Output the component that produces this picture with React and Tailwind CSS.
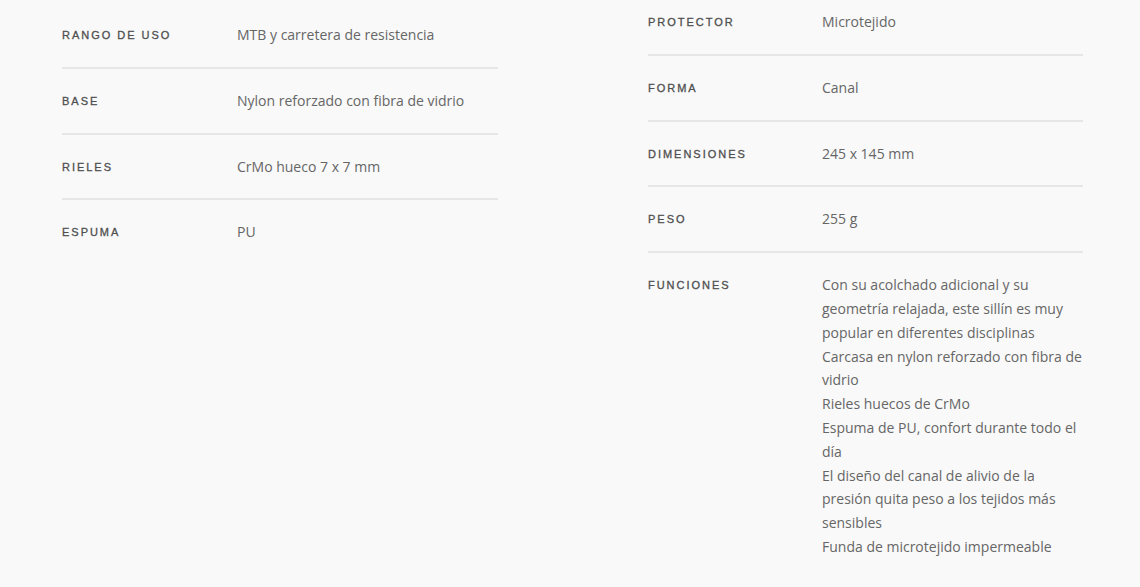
const left = [
  { label: 'Rango de uso', value: 'MTB y carretera de resistencia' },
  { label: 'Base', value: 'Nylon reforzado con fibra de vidrio' },
  { label: 'Rieles', value: 'CrMo hueco 7 x 7 mm' },
  { label: 'Espuma', value: 'PU' },
];

const right = [
  { label: 'Protector', value: 'Microtejido' },
  { label: 'Forma', value: 'Canal' },
  { label: 'Dimensiones', value: '245 x 145 mm' },
  { label: 'Peso', value: '255 g' },
  {
    label: 'Funciones',
    value: [
      'Con su acolchado adicional y su geometría relajada, este sillín es muy popular en diferentes disciplinas',
      'Carcasa en nylon reforzado con fibra de vidrio',
      'Rieles huecos de CrMo',
      'Espuma de PU, confort durante todo el día',
      'El diseño del canal de alivio de la presión quita peso a los tejidos más sensibles',
      'Funda de microtejido impermeable',
    ],
  },
];

function SpecRow({ spec, last }) {
  return (
    <div className={`flex py-5 ${last ? '' : 'border-b-2 border-[#e6e6e6]'}`}>
      <dt className="w-[175px] shrink-0 pt-[3px] font-['Liberation_Sans',sans-serif] text-[11px] font-normal uppercase leading-[18px] tracking-[0.18em] text-[#4f4f4f] [-webkit-text-stroke:0.3px_#4f4f4f]">
        {spec.label}
      </dt>
      <dd className="flex-1 font-['Open_Sans',sans-serif] text-[14px] leading-[1.7] text-[#666]">
        {Array.isArray(spec.value)
          ? spec.value.map((line) => <p key={line}>{line}</p>)
          : spec.value}
      </dd>
    </div>
  );
}

export default function App() {
  return (
    <div className="min-h-screen overflow-hidden bg-[#f9f9f9]">
      <div className="flex gap-[150px] pl-[62px] -mt-[10px]">
        <dl className="w-[436px] pt-[13px]">
          {left.map((s, i) => (
            <SpecRow key={s.label} spec={s} last={i === left.length - 1} />
          ))}
        </dl>
        <dl className="w-[435px] [&_dt]:w-[174px]">
          {right.map((s, i) => (
            <SpecRow key={s.label} spec={s} last={i === right.length - 1} />
          ))}
        </dl>
      </div>
    </div>
  );
}
